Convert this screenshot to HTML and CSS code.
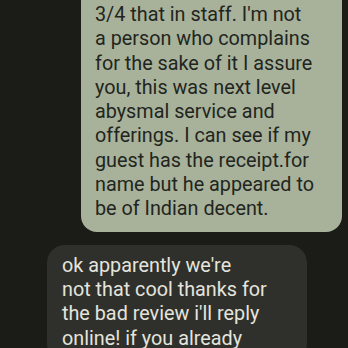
FILE: index.html
```html
<!DOCTYPE html>
<html>
<head>
<meta charset="utf-8">
<link rel="stylesheet" href="styles.css">
</head>
<body>
<div class="thread">
  <div class="bubble sent">
    3/4 that in staff. I'm not<br>
    a person who complains<br>
    for the sake of it I assure<br>
    you, this was next level<br>
    abysmal service and<br>
    offerings. I can see if my<br>
    guest has the receipt.for<br>
    name but he appeared to<br>
    be of Indian decent.
  </div>
  <div class="bubble received">
    ok apparently we're<br>
    not that cool thanks for<br>
    the bad review i'll reply<br>
    online! if you already
  </div>
</div>
</body>
</html>
```
FILE: styles.css
```css
html, body {
  margin: 0;
  padding: 0;
  background: #1b1c18;
  width: 348px;
  height: 348px;
  overflow: hidden;
}
.thread {
  display: flex;
  flex-direction: column;
  gap: 13px;
  font-family: Roboto, "Noto Sans", sans-serif;
  font-size: 19.8px;
  line-height: 24.3px;
}
.bubble {
  white-space: nowrap;
}
.sent {
  margin-top: -20px;
  margin-left: 81px;
  width: 261px;
  box-sizing: border-box;
  padding: 23px 10px 10px 14px;
  background: #a8b29a;
  color: #22251e;
  border-radius: 16px;
}
.received {
  margin-left: 47px;
  width: 260px;
  box-sizing: border-box;
  padding: 9px 10px 10px 15px;
  background: #2f302b;
  color: #e4e4dd;
  border-radius: 18px;
}
```
